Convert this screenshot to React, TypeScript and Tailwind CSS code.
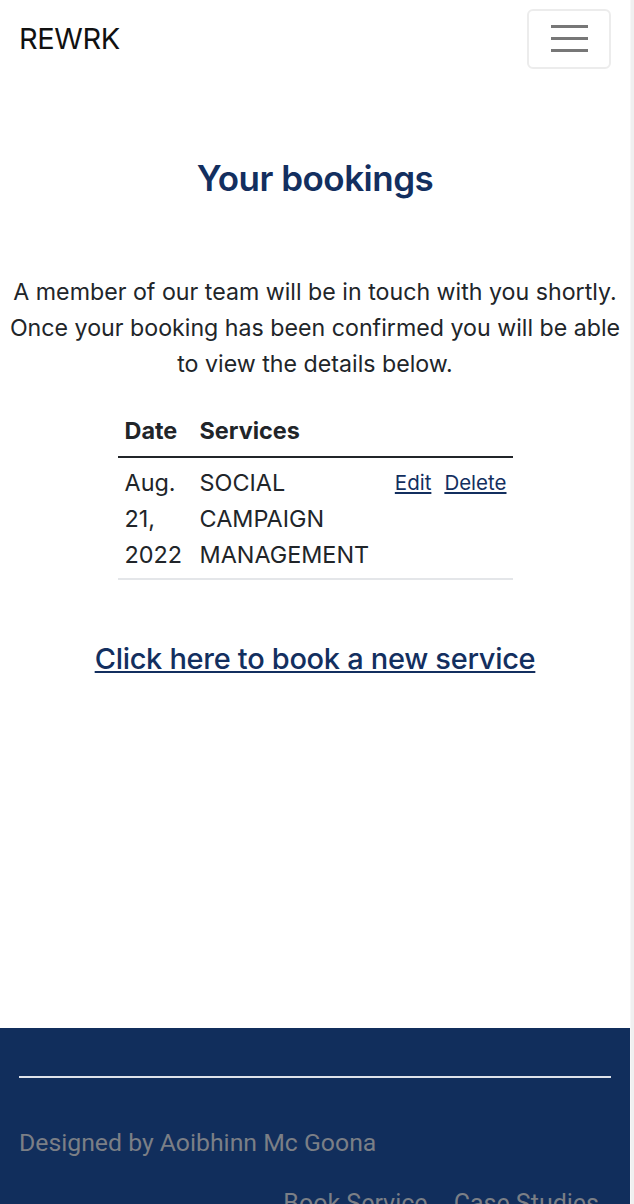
const bookings = [
  { date: ["Aug.", "21,", "2022"], service: ["SOCIAL", "CAMPAIGN", "MANAGEMENT"] },
];

const Navbar = () => (
  <nav className="flex items-center justify-between h-[78px] pl-[19px] pr-[19px]">
    <a className="text-[29px] text-[#111] tracking-[-0.4px]" href="#">
      REWRK
    </a>
    <button className="w-[84px] h-[60px] mt-[-1px] rounded-[6px] border-2 border-[#ececec] flex flex-col items-center justify-center gap-[9px]">
      <span className="block w-[37px] h-[3px] bg-[#777]" />
      <span className="block w-[37px] h-[3px] bg-[#777]" />
      <span className="block w-[37px] h-[3px] bg-[#777]" />
    </button>
  </nav>
);

const BookingsTable = () => (
  <table className="mx-auto w-[395px] text-[23.4px] text-[#212529] border-collapse">
    <thead>
      <tr className="border-b-2 border-[#212529]">
        <th className="text-left font-bold px-[7px] pt-[6px] pb-[8px] w-[75px]">Date</th>
        <th className="text-left font-bold px-[7px] pt-[6px] pb-[8px]">Services</th>
        <th className="px-[7px]" />
      </tr>
    </thead>
    <tbody>
      {bookings.map((b, i) => (
        <tr key={i} className="border-b-2 border-[#e4e6e9] align-top">
          <td className="px-[7px] pt-[7px] pb-[5px] leading-[36px]">
            {b.date.map((d) => (
              <div key={d}>{d}</div>
            ))}
          </td>
          <td className="px-[7px] pt-[7px] pb-[5px] leading-[36px] whitespace-nowrap">
            {b.service.map((s) => (
              <div key={s}>{s}</div>
            ))}
          </td>
          <td className="px-[6px] pt-[7px] text-right text-[20.5px] leading-[36px] whitespace-nowrap">
            <a href="#" className="underline text-[#132f5f] mr-[13px]">Edit</a>
            <a href="#" className="underline text-[#132f5f]">Delete</a>
          </td>
        </tr>
      ))}
    </tbody>
  </table>
);

const Footer = () => (
  <footer className="bg-[#112e5c] h-[176px] px-[19px] pt-[48px] font-['Roboto',sans-serif] overflow-hidden">
    <hr className="border-0 h-[2px] bg-[#dfe3ea]" />
    <p className="mt-[46px] text-[24.8px] text-[#7b7f86]">Designed by Aoibhinn Mc Goona</p>
    <div className="flex justify-end gap-[26px] mt-[24px] pr-[12px] text-[25px] text-[#7b7f86]">
      <a href="#">Book Service</a>
      <a href="#">Case Studies</a>
    </div>
  </footer>
);

export default function App() {
  return (
    <div className="flex h-[1204px] overflow-hidden bg-white font-['Inter',sans-serif]">
      <div className="w-[630px] flex flex-col">
        <Navbar />
        <main className="h-[950px] flex flex-col items-center">
          <h1 className="mt-[74px] text-[35px] font-semibold text-[#132f5f] tracking-[-0.5px]">Your bookings</h1>
          <p className="mt-[69px] text-center text-[23.2px] leading-[36px] text-[#212529] px-[4px]">
            A member of our team will be in touch with you shortly. Once your booking has been confirmed you will be able to view the details below.
          </p>
          <div className="mt-[25px]">
            <BookingsTable />
          </div>
          <a href="#" className="mt-[57px] text-[29px] font-medium text-[#132f5f] underline tracking-[-0.3px]">
            Click here to book a new service
          </a>
        </main>
        <Footer />
      </div>
      <div className="w-[4px] bg-[#f0f0f0] border-l border-[#f7f7f7]" />
    </div>
  );
}
